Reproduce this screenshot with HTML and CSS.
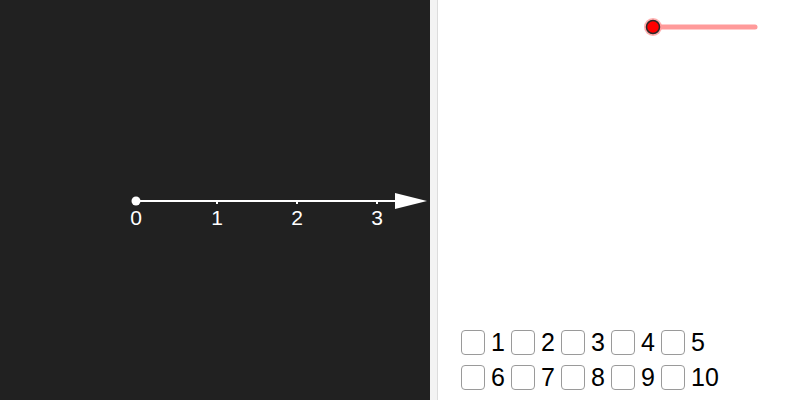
FILE: index.html
```html
<!DOCTYPE html>
<html>
<head>
<meta charset="utf-8">
<link rel="stylesheet" href="styles.css">
</head>
<body>
<div class="app">
  <div class="graphics">
    <svg class="canvas" width="430" height="400" viewBox="0 0 430 400">
      <line x1="136" y1="201" x2="398" y2="201" stroke="#ffffff" stroke-width="2"/>
      <polygon points="395,193 427,201 395,209" fill="#ffffff"/>
      <line x1="217" y1="200" x2="217" y2="204" stroke="#ffffff" stroke-width="2"/>
      <line x1="297" y1="200" x2="297" y2="204" stroke="#ffffff" stroke-width="2"/>
      <line x1="377" y1="200" x2="377" y2="204" stroke="#ffffff" stroke-width="2"/>
      <circle cx="136" cy="201" r="4.5" fill="#ffffff"/>
      <text class="tick" x="136" y="225" text-anchor="middle">0</text>
      <text class="tick" x="217" y="225" text-anchor="middle">1</text>
      <text class="tick" x="297" y="225" text-anchor="middle">2</text>
      <text class="tick" x="377" y="225" text-anchor="middle">3</text>
    </svg>
  </div>
  <div class="divider"></div>
  <div class="panel">
    <div class="slider-row">
      <svg width="120" height="24" viewBox="0 0 120 24">
        <line x1="12" y1="12" x2="114" y2="12" stroke="#ff9a9a" stroke-width="5" stroke-linecap="round"/>
        <circle cx="12" cy="12" r="9" fill="#ff9a9a" opacity="0.8"/>
        <circle cx="12" cy="12" r="6.5" fill="#ff0000" stroke="#2a2a2a" stroke-width="1.5"/>
      </svg>
    </div>
    <div class="checks">
      <div class="row">
        <span class="item"><span class="box"></span><span class="lbl">1</span></span>
        <span class="item"><span class="box"></span><span class="lbl">2</span></span>
        <span class="item"><span class="box"></span><span class="lbl">3</span></span>
        <span class="item"><span class="box"></span><span class="lbl">4</span></span>
        <span class="item"><span class="box"></span><span class="lbl">5</span></span>
      </div>
      <div class="row">
        <span class="item"><span class="box"></span><span class="lbl">6</span></span>
        <span class="item"><span class="box"></span><span class="lbl">7</span></span>
        <span class="item"><span class="box"></span><span class="lbl">8</span></span>
        <span class="item"><span class="box"></span><span class="lbl">9</span></span>
        <span class="item"><span class="box"></span><span class="lbl">10</span></span>
      </div>
    </div>
  </div>
</div>
</body>
</html>
```
FILE: styles.css
```css
html, body {
  margin: 0;
  padding: 0;
  background: #ffffff;
  font-family: "Liberation Sans", Arial, sans-serif;
}
.app {
  display: flex;
  width: 800px;
  height: 400px;
  overflow: hidden;
}
.graphics {
  width: 430px;
  height: 400px;
  background: #212121;
  flex: none;
}
.canvas {
  display: block;
}
.tick {
  font-family: "Liberation Sans", Arial, sans-serif;
  font-size: 21px;
  fill: #ffffff;
}
.divider {
  width: 7px;
  flex: none;
  background: #f3f3f3;
  border-right: 1px solid #dcdcdc;
}
.panel {
  flex: 1;
  display: flex;
  flex-direction: column;
  justify-content: space-between;
}
.slider-row {
  padding: 15px 0 0 203px;
}
.slider-row svg {
  display: block;
}
.checks {
  padding: 0 0 10px 23px;
  display: flex;
  flex-direction: column;
  gap: 10px;
}
.row {
  display: flex;
  align-items: center;
  height: 25px;
}
.item {
  display: flex;
  align-items: center;
  margin-right: 6.1px;
}
.box {
  width: 22px;
  height: 23px;
  border: 1px solid #9a9a9a;
  border-radius: 4px;
  background: #ffffff;
  margin-right: 6px;
}
.lbl {
  font-size: 25px;
  color: #000000;
  line-height: 25px;
}
```
